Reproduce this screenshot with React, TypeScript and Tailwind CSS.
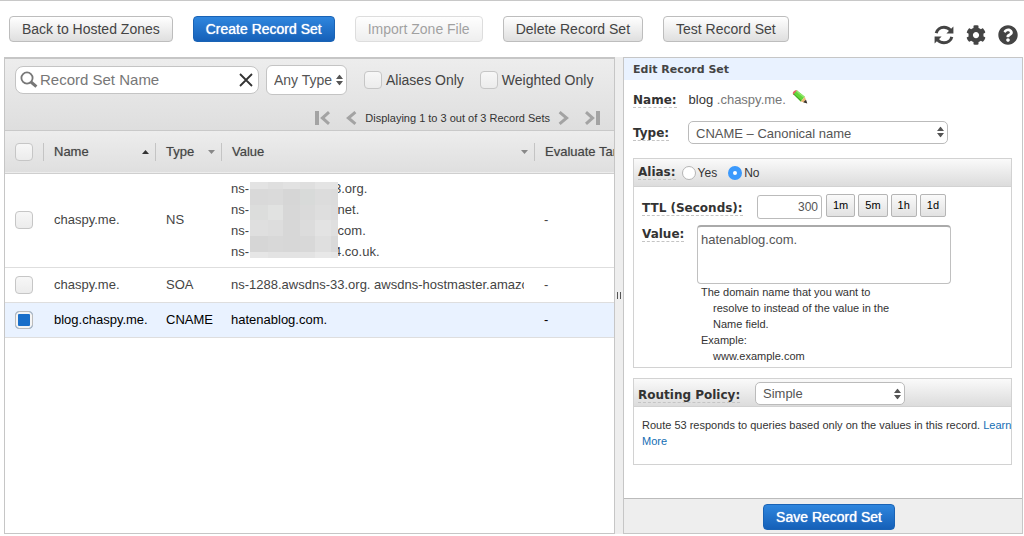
import { ReactNode, useState } from "react";
import { clsx } from "clsx";
import { FaCog, FaQuestionCircle } from "react-icons/fa";

const MOSAIC = [
  ["#e3e3e3", "#dfdfdf", "#e2e2e2", "#dfdfdf", "#e4e4e4", "#e4e4e4"],
  ["#d9d9d9", "#dadada", "#d6d6d6", "#d8dad9", "#dcdcdc", "#dbdbdb"],
  ["#dcdddc", "#e1e2e1", "#d7d7d7", "#dadada", "#dedede", "#dcdcdc"],
  ["#dfdfdf", "#dddddd", "#d7d7d7", "#dcdcdc", "#e3e3e3", "#dfdfdf"],
  ["#d6d6d6", "#d8d8d8", "#d7d7d7", "#d8d8d8", "#dfdfdf", "#d9d9d9"],
  ["#e6e6e6", "#e3e3e3", "#e3e3e3", "#e3e3e3", "#e8e8e8", "#e6e6e6"],
];
const MOSAIC_X = [0, 18, 33, 50, 65, 81, 88];
const MOSAIC_Y = [0, 7, 23, 38, 54, 70, 76];

const Mosaic = () => (
  <svg width="88" height="76" shapeRendering="crispEdges" className="relative shrink-0">
    {MOSAIC.map((row, y) =>
      row.map((fill, x) => (
        <rect
          key={`${x}-${y}`}
          x={MOSAIC_X[x]}
          y={MOSAIC_Y[y]}
          width={MOSAIC_X[x + 1] - MOSAIC_X[x]}
          height={MOSAIC_Y[y + 1] - MOSAIC_Y[y]}
          fill={fill}
        />
      )),
    )}
  </svg>
);

const RefreshIcon = () => (
  <svg width="20" height="20" viewBox="0 0 20 20">
    <g fill="none" stroke="currentColor" strokeWidth="3">
      <path d="M2.2 8.2C3 4.6 6.2 2.2 10 2.2c2.8 0 5 1.2 6.6 3.2" />
      <path d="M17.8 11.8c-.8 3.6-4 6-7.8 6-2.8 0-5-1.2-6.6-3.2" />
    </g>
    <path d="M19.4 1.4v7h-7zM.6 18.6v-7h7z" fill="currentColor" />
  </svg>
);

const SearchIcon = () => (
  <svg width="18" height="18" viewBox="0 0 18 18" fill="none" stroke="#777">
    <circle cx="7" cy="7" r="5.6" strokeWidth="1.8" />
    <path d="M11 11l5.4 4.6" strokeWidth="3" />
  </svg>
);

const PencilIcon = () => (
  <svg width="16" height="16" viewBox="0 0 16 16">
    <path d="M1 5.4C.2 3.6 1.8 1 4.6 1.2l1.4 1-3.6 4z" fill="#e8616a" />
    <path d="M1.4 5.2l3.6-3.6 7.8 6.2-4 4.6z" fill="#63d63b" />
    <path d="M1.4 5.2l.5-.5 7.7 6.8-.8.9z" fill="#3fa426" />
    <path d="M4 2.6l1-1 7.8 6.2-1 1.1z" fill="#8fe86a" />
    <path d="M12.8 7.8l2.2 6.4-6.2-1.8z" fill="#e9b877" />
    <path d="M14 10.8l1.3 3.7-4.1-1.2z" fill="#333" />
  </svg>
);

const PagerIcon = ({ end, flip }: { end?: boolean; flip?: boolean }) => (
  <svg
    width="16"
    height="14"
    viewBox="0 0 16 14"
    className={clsx("text-[#a3a3a3]", flip && "-scale-x-100")}
  >
    {end && <rect x="0" y="0" width="4" height="14" fill="currentColor" />}
    <path
      d={end ? "M14 1.2L7.4 7l6.6 5.8" : "M12.4 1.2L5.4 7l7 5.8"}
      fill="none"
      stroke="currentColor"
      strokeWidth="3"
    />
  </svg>
);

const Arrows = () => (
  <svg
    width="7"
    height="11"
    viewBox="0 0 7 11"
    fill="#555"
    className="pointer-events-none absolute right-1 top-1/2 -translate-y-1/2"
  >
    <path d="M3.5 0L7 4.4H0zM3.5 11L0 6.6h7z" />
  </svg>
);

const Button = ({
  children,
  primary,
  disabled,
}: {
  children: ReactNode;
  primary?: boolean;
  disabled?: boolean;
}) => (
  <button
    type="button"
    disabled={disabled}
    className={clsx(
      "h-[26px] whitespace-nowrap rounded border px-3 text-sm leading-none",
      primary
        ? "border-[#1a63b5] bg-linear-to-b from-[#2f86de] to-[#1560b8] text-white [text-shadow:0_0_1px_#fff]"
        : "border-[#bdbdbd] bg-linear-to-b from-white to-[#dfdfdf] text-[#444]",
      disabled && "opacity-50",
    )}
  >
    {children}
  </button>
);

const Checkbox = ({
  label,
  checked,
  onChange,
}: {
  label: string;
  checked: boolean;
  onChange: () => void;
}) => (
  <input
    type="checkbox"
    aria-label={label}
    checked={checked}
    onChange={onChange}
    className="block size-[18px] shrink-0 appearance-none rounded border border-[#c6c6c6] bg-linear-to-b from-[#f7f7f7] to-[#ececec] checked:border-[#bbb] checked:bg-none checked:bg-[#1a6fc9] checked:shadow-[inset_0_0_0_2px_#f4f4f4]"
  />
);

const Label = ({ children, htmlFor }: { children: ReactNode; htmlFor?: string }) => (
  <label
    htmlFor={htmlFor}
    className="whitespace-nowrap border-b border-dashed border-[#c4c4c4] font-['DejaVu_Sans',sans-serif] text-xs leading-[14px] font-bold text-[#333]"
  >
    {children}
  </label>
);

const Radio = ({
  label,
  checked,
  onChange,
}: {
  label: string;
  checked: boolean;
  onChange: () => void;
}) => (
  <label className="flex items-center gap-0.5 text-xs text-[#333]">
    <input
      type="radio"
      name="alias"
      checked={checked}
      onChange={onChange}
      className="size-3.5 appearance-none rounded-full border border-[#b5b5b5] bg-white checked:border-[5px] checked:border-[#3b99fc]"
    />
    {label}
  </label>
);

const columns = [
  { name: "Name", sort: "up" },
  { name: "Type", sort: "down" },
  { name: "Value", sort: "down" },
  { name: "Evaluate Target Health", sort: null },
];

const records = [
  { id: "ns", name: "chaspy.me.", type: "NS", value: "", height: "h-[94px]" },
  {
    id: "soa",
    name: "chaspy.me.",
    type: "SOA",
    value: "ns-1288.awsdns-33.org. awsdns-hostmaster.amazon.com.",
    height: "h-[35px]",
  },
  {
    id: "cname",
    name: "blog.chaspy.me.",
    type: "CNAME",
    value: "hatenablog.com.",
    height: "h-[35px]",
  },
];

const nameServers = ["3.org.", ".net.", ".com.", "4.co.uk."];

const RecordTable = () => {
  const [selected, setSelected] = useState<string[]>(["cname"]);

  const toggle = (id: string) =>
    setSelected((ids) =>
      ids.includes(id) ? ids.filter((e) => e !== id) : [...ids, id],
    );

  return (
    <table className="w-full table-fixed border-collapse text-left text-[13px] text-[#444]">
      <colgroup>
        <col className="w-[38px]" />
        <col className="w-[112px]" />
        <col className="w-[66px]" />
        <col />
        <col className="w-20" />
      </colgroup>
      <thead>
        <tr className="h-[42px] border-b border-[#cfcfcf] bg-linear-to-b from-[#ededed] to-[#dfdfdf]">
          <th className="pl-2.5">
            <Checkbox
              label="Select all"
              checked={selected.length === records.length}
              onChange={() =>
                setSelected(
                  selected.length === records.length ? [] : records.map((e) => e.id),
                )
              }
            />
          </th>
          {columns.map((col) => (
            <th key={col.name} className="overflow-hidden font-normal">
              <div className="flex h-[18px] items-center justify-between border-l border-[#c4c4c4] pr-1.5 pl-2.5 whitespace-nowrap [text-shadow:0_0_1px_#999]">
                {col.name}
                {col.sort && (
                  <svg width="7" height="4" viewBox="0 0 7 4" className="shrink-0">
                    {col.sort === "up" ? (
                      <path d="M3.5 0L7 4H0z" fill="#333" />
                    ) : (
                      <path d="M0 0h7L3.5 4z" fill="#888" />
                    )}
                  </svg>
                )}
              </div>
            </th>
          ))}
        </tr>
      </thead>
      <tbody>
        {records.map((record) => (
          <tr
            key={record.id}
            className={clsx(
              "border-b border-[#dedede]",
              record.height,
              selected.includes(record.id) && "bg-[#e9f2ff] text-black",
            )}
          >
            <td className="pl-2.5">
              <Checkbox
                label={`Select ${record.name} ${record.type}`}
                checked={selected.includes(record.id)}
                onChange={() => toggle(record.id)}
              />
            </td>
            <td className="pl-[11px]">{record.name}</td>
            <td className="pl-[11px]">{record.type}</td>
            <td className="px-2.5">
              {record.id === "ns" ? (
                <div className="flex items-center leading-[21px]">
                  <div className="w-[19px] shrink-0">
                    {nameServers.map((server) => (
                      <div key={server}>ns-</div>
                    ))}
                  </div>
                  <Mosaic />
                  <div className="-ml-1">
                    {nameServers.map((server) => (
                      <div key={server}>{server}</div>
                    ))}
                  </div>
                </div>
              ) : (
                <div className="overflow-hidden whitespace-nowrap">{record.value}</div>
              )}
            </td>
            <td className="pl-2.5">-</td>
          </tr>
        ))}
      </tbody>
    </table>
  );
};

const RecordList = () => {
  const [search, setSearch] = useState("");
  const [aliases, setAliases] = useState(false);
  const [weighted, setWeighted] = useState(false);

  return (
    <section className="min-w-0 flex-1 overflow-hidden border border-t-2 border-[#c6c6c6] bg-white">
      <div className="border-b border-[#c9c9c9] bg-linear-to-b from-[#ededed] to-[#dedede] pt-1.5 pb-[3px]">
        <div className="flex items-center pl-2.5">
          <div className="flex h-7 w-[244px] items-center rounded-lg border border-[#c4c4c4] bg-white px-1">
            <SearchIcon />
            <input
              type="text"
              aria-label="Record Set Name"
              placeholder="Record Set Name"
              value={search}
              onChange={(e) => setSearch(e.target.value)}
              className="ml-0.5 min-w-0 flex-1 text-[15px] text-[#444] outline-none placeholder:text-[#777]"
            />
            <button type="button" aria-label="Clear" onClick={() => setSearch("")}>
              <svg width="16" height="16" viewBox="0 0 16 16" stroke="#333" strokeWidth="1.8">
                <path d="M2 2l12 12M14 2L2 14" />
              </svg>
            </button>
          </div>
          <div className="relative ml-[7px]">
            <select
              aria-label="Record type filter"
              className="h-[30px] w-[81px] appearance-none rounded-md border border-[#c4c4c4] bg-white pl-[7px] text-sm text-[#555]"
            >
              <option>Any Type</option>
            </select>
            <Arrows />
          </div>
          <label className="ml-[17px] flex items-center gap-1 text-sm whitespace-nowrap text-[#444]">
            <Checkbox
              label="Aliases Only"
              checked={aliases}
              onChange={() => setAliases(!aliases)}
            />
            Aliases Only
          </label>
          <label className="ml-4 flex items-center gap-1 text-sm whitespace-nowrap text-[#444]">
            <Checkbox
              label="Weighted Only"
              checked={weighted}
              onChange={() => setWeighted(!weighted)}
            />
            Weighted Only
          </label>
        </div>
        <div className="mt-3.5 flex h-[18px] items-center justify-end pr-3.5 text-[11px] text-[#333]">
          <button type="button" aria-label="First page" className="mr-3">
            <PagerIcon end />
          </button>
          <button type="button" aria-label="Previous page" className="mr-1.5">
            <PagerIcon />
          </button>
          <span>Displaying 1 to 3 out of 3 Record Sets</span>
          <button type="button" aria-label="Next page" className="mr-3 ml-1.5">
            <PagerIcon flip />
          </button>
          <button type="button" aria-label="Last page">
            <PagerIcon end flip />
          </button>
        </div>
      </div>
      <RecordTable />
    </section>
  );
};

const EditPanel = () => {
  const [alias, setAlias] = useState(false);
  const [ttl, setTtl] = useState("300");
  const [value, setValue] = useState("hatenablog.com.");

  const presets = [
    { name: "1m", seconds: "60" },
    { name: "5m", seconds: "300" },
    { name: "1h", seconds: "3600" },
    { name: "1d", seconds: "86400" },
  ];

  return (
    <section className="flex w-[400px] shrink-0 flex-col border border-[#c6c6c6] bg-white text-[#333]">
      <h2 className="bg-[#e9f2ff] pt-0.5 pl-[9px] font-['DejaVu_Sans',sans-serif] text-[11px] leading-5 font-bold text-[#444]">
        Edit Record Set
      </h2>
      <div className="flex-1 pr-2.5 pl-[9px]">
        <div className="mt-2 flex h-6 items-center text-[13px]">
          <Label>Name:</Label>
          <span className="ml-3">
            blog <span className="text-[#777]">.chaspy.me.</span>
          </span>
          <button type="button" aria-label="Edit name" className="mb-1.5 ml-1.5">
            <PencilIcon />
          </button>
        </div>
        <div className="mt-2 flex items-center">
          <div className="w-[55px]">
            <Label htmlFor="type">Type:</Label>
          </div>
          <div className="relative w-[260px]">
            <select
              id="type"
              className="block h-[23px] w-full appearance-none rounded-[5px] border border-[#bbb] bg-white pt-0.5 pl-[7px] text-[13px] text-[#555]"
            >
              <option>CNAME – Canonical name</option>
            </select>
            <Arrows />
          </div>
        </div>

        <div className="mt-3.5 border border-[#d2d2d2]">
          <div
            role="radiogroup"
            aria-label="Alias"
            className="flex h-7 items-center border-b border-[#d2d2d2] bg-linear-to-b from-[#fafafa] to-[#dcdcdc] pl-1"
          >
            <Label>Alias:</Label>
            <div className="ml-1.5 flex gap-[11px]">
              <Radio label="Yes" checked={alias} onChange={() => setAlias(true)} />
              <Radio label="No" checked={!alias} onChange={() => setAlias(false)} />
            </div>
          </div>
          <div className="px-2 pt-[7px] pb-[3px]">
            <div className="flex items-center">
              <div className="w-[115px]">
                <Label htmlFor="ttl">TTL (Seconds):</Label>
              </div>
              <input
                id="ttl"
                type="text"
                value={ttl}
                onChange={(e) => setTtl(e.target.value)}
                className="h-6 w-[65px] rounded-[3px] border border-[#bbb] px-[3px] text-right text-xs text-[#555]"
              />
              <div className="mb-0.5 ml-1 flex gap-[3px]">
                {presets.map((preset) => (
                  <button
                    key={preset.name}
                    type="button"
                    onClick={() => setTtl(preset.seconds)}
                    className="h-[23px] rounded-[2px] border border-[#b5b5b5] bg-linear-to-b from-[#fafafa] to-[#e2e2e2] px-[6px] text-[11px] text-black"
                  >
                    {preset.name}
                  </button>
                ))}
              </div>
            </div>
            <div className="mt-1.5 flex items-start">
              <div className="w-[55px] leading-4">
                <Label htmlFor="value">Value:</Label>
              </div>
              <div>
                <textarea
                  id="value"
                  value={value}
                  onChange={(e) => setValue(e.target.value)}
                  className="block h-[59px] w-[254px] resize-none rounded border border-t-2 border-[#c0c0c0] border-t-[#aaa] px-[3px] py-[3px] text-[13px] text-[#555]"
                />
                <div className="w-[210px] pl-1 text-[11px] leading-4">
                  <p className="pl-3 -indent-3">
                    The domain name that you want to
                    <br />
                    resolve to instead of the value in the Name field.
                  </p>
                  <p>Example:</p>
                  <p className="pl-3">www.example.com</p>
                </div>
              </div>
            </div>
          </div>
        </div>

        <div className="mt-2.5 border border-[#d2d2d2]">
          <div className="flex h-7 items-center border-b border-[#d2d2d2] bg-linear-to-b from-[#fafafa] to-[#dcdcdc] pt-0.5 pl-1">
            <div className="w-[117px]">
              <Label htmlFor="policy">Routing Policy:</Label>
            </div>
            <div className="relative w-[150px]">
              <select
                id="policy"
                className="block h-[23px] w-full appearance-none rounded-[5px] border border-[#bbb] bg-white pl-[7px] text-[13px] text-[#555]"
              >
                <option>Simple</option>
              </select>
              <Arrows />
            </div>
          </div>
          <p className="-mr-1 pt-2.5 pb-[15px] pl-2 text-[11px] leading-4">
            Route 53 responds to queries based only on the values in this record.{" "}
            <a href="#" className="text-[#146eb4]">
              Learn More
            </a>
          </p>
        </div>
      </div>
      <div className="flex h-[35px] items-center justify-center border-t border-[#bbb] bg-[#eee] pt-0.5 pl-3">
        <Button primary>Save Record Set</Button>
      </div>
    </section>
  );
};

const App = () => {
  return (
    <div className="flex h-screen flex-col border-t border-[#c8c8c8] bg-white pb-0.5 font-['Liberation_Sans',Arial,sans-serif]">
      <header className="flex h-14 shrink-0 items-center justify-between pr-1.5 pl-[9px]">
        <div className="flex gap-5">
          <Button>Back to Hosted Zones</Button>
          <Button primary>Create Record Set</Button>
          <Button disabled>Import Zone File</Button>
          <Button>Delete Record Set</Button>
          <Button>Test Record Set</Button>
        </div>
        <div className="mt-3 flex gap-3 text-[#444]">
          <button type="button" aria-label="Refresh">
            <RefreshIcon />
          </button>
          <button type="button" aria-label="Settings">
            <FaCog size={20} />
          </button>
          <button type="button" aria-label="Help">
            <FaQuestionCircle size={20} />
          </button>
        </div>
      </header>
      <main className="flex min-h-0 flex-1 pr-px pl-1">
        <RecordList />
        <div className="flex w-2 shrink-0 items-center justify-center bg-[#eee]">
          <svg width="4" height="7" viewBox="0 0 4 7" fill="#555">
            <path d="M0 0h1v7H0zM3 0h1v7H3z" />
          </svg>
        </div>
        <EditPanel />
      </main>
    </div>
  );
};

export default App;
